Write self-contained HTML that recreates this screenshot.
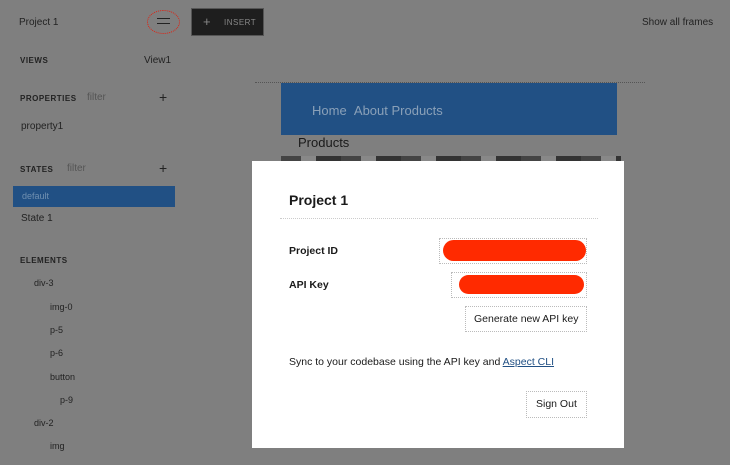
<!DOCTYPE html>
<html><head><style>
body{margin:0;width:730px;height:465px;background:#7f7f7f;font-family:"Liberation Sans",sans-serif;position:relative;overflow:hidden;color:#1a1a1a}
.a{position:absolute;white-space:nowrap}
.cap{font-size:8px;font-weight:bold;letter-spacing:.5px;color:#222}
.f{font-size:10px;color:#555}
.s{font-size:10px;color:#222}
.pl{font-size:14px;color:#222}
.m{position:absolute;left:252px;top:161px;width:372px;height:287px;background:#fff}
.dot{border:1px dotted #bbb}
</style></head><body>
<div class="a s" style="left:19px;top:17px">Project 1</div>
<div class="a" style="left:147px;top:10px;width:31px;height:22px;border:1px dotted #e02010;border-radius:50%"></div>
<div class="a" style="left:157px;top:18px;width:13px;height:1px;background:#222"></div>
<div class="a" style="left:157px;top:23px;width:13px;height:1px;background:#222"></div>
<div class="a" style="left:191px;top:8px;width:73px;height:28px;background:#1e1e1e;border:1px solid #555;box-sizing:border-box"></div>
<div class="a" style="left:203px;top:14px;color:#888;font-size:13px">+</div>
<div class="a" style="left:224px;top:18px;color:#888;font-size:8px;letter-spacing:.5px">INSERT</div>
<div class="a s" style="left:642px;top:17px">Show all frames</div>
<div class="a cap" style="left:20px;top:56px">VIEWS</div>
<div class="a s" style="left:144px;top:55px">View1</div>
<div class="a cap" style="left:20px;top:94px">PROPERTIES</div>
<div class="a f" style="left:87px;top:92px">filter</div>
<div class="a pl" style="left:159px;top:89px">+</div>
<div class="a s" style="left:21px;top:121px">property1</div>
<div class="a cap" style="left:20px;top:165px">STATES</div>
<div class="a f" style="left:67px;top:163px">filter</div>
<div class="a pl" style="left:159px;top:160px">+</div>
<div class="a" style="left:13px;top:186px;width:162px;height:21px;background:#215084"></div>
<div class="a" style="left:22px;top:191px;font-size:9px;color:#7090b0">default</div>
<div class="a s" style="left:21px;top:213px">State 1</div>
<div class="a cap" style="left:20px;top:256px">ELEMENTS</div>
<div class="a s" style="left:34px;top:278px;font-size:9px">div-3</div>
<div class="a s" style="left:50px;top:302px;font-size:9px">img-0</div>
<div class="a s" style="left:50px;top:325px;font-size:9px">p-5</div>
<div class="a s" style="left:50px;top:348px;font-size:9px">p-6</div>
<div class="a s" style="left:50px;top:372px;font-size:9px">button</div>
<div class="a s" style="left:60px;top:395px;font-size:9px">p-9</div>
<div class="a s" style="left:34px;top:418px;font-size:9px">div-2</div>
<div class="a s" style="left:50px;top:441px;font-size:9px">img</div>
<div class="a" style="left:255px;top:82px;width:390px;border-top:1px dotted #555"></div>
<div class="a" style="left:281px;top:83px;width:336px;height:52px;background:#215084"></div>
<div class="a" style="left:312px;top:103px;font-size:13px;color:#8aa0b8">Home &nbsp;About Products</div>
<div class="a" style="left:298px;top:135px;font-size:13px;color:#1a1a1a">Products</div>
<div class="a" style="left:281px;top:156px;width:340px;height:5px;background:repeating-linear-gradient(90deg,#444 0 20px,#888 20px 35px,#333 35px 60px)"></div>
<div class="m">
<div class="a" style="left:37px;top:31px;font-size:14px;font-weight:bold">Project 1</div>
<div class="a" style="left:28px;top:57px;width:318px;border-top:1px dotted #ccc"></div>
<div class="a" style="left:37px;top:84px;font-size:10.5px;font-weight:bold">Project ID</div>
<div class="a dot" style="left:187px;top:77px;width:146px;height:24px"></div>
<div class="a" style="left:191px;top:79px;width:143px;height:21px;background:#ff2a00;border-radius:11px"></div>
<div class="a" style="left:37px;top:118px;font-size:10.5px;font-weight:bold">API Key</div>
<div class="a dot" style="left:199px;top:111px;width:134px;height:24px"></div>
<div class="a" style="left:207px;top:114px;width:125px;height:19px;background:#ff2a00;border-radius:10px"></div>
<div class="a dot" style="left:213px;top:145px;width:120px;height:24px"></div>
<div class="a" style="left:222px;top:152px;font-size:10.5px">Generate new API key</div>
<div class="a" style="left:37px;top:195px;font-size:10.5px">Sync to your codebase using the API key and <span style="color:#215084;text-decoration:underline">Aspect CLI</span></div>
<div class="a dot" style="left:274px;top:230px;width:59px;height:25px"></div>
<div class="a" style="left:284px;top:237px;font-size:10.5px">Sign Out</div>
</div>
</body></html>
